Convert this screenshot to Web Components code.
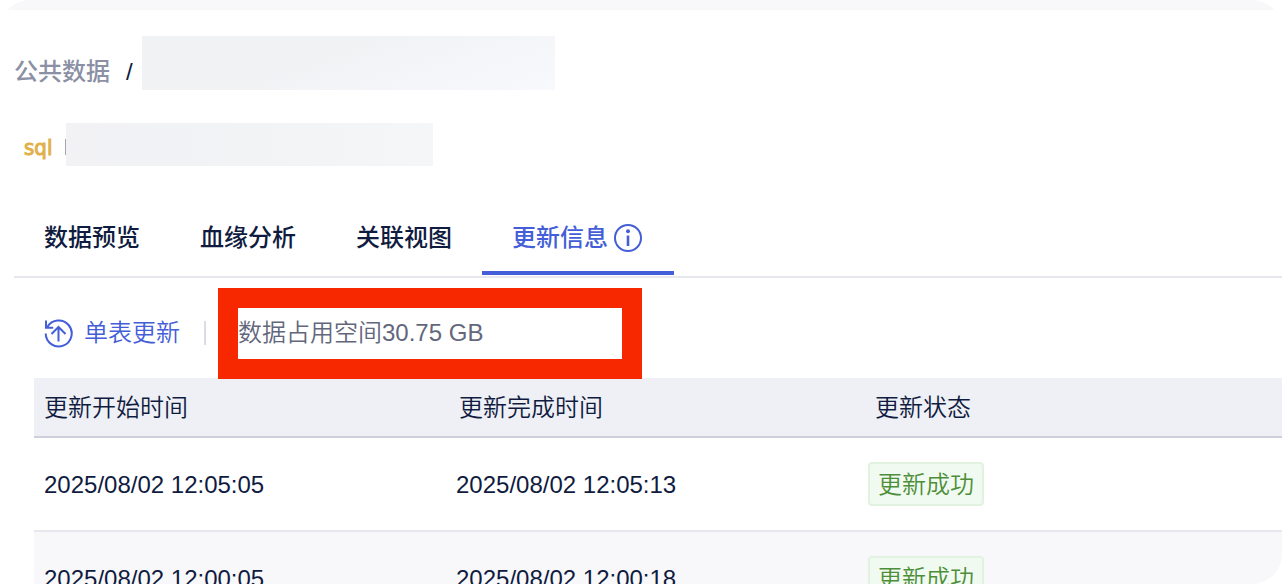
<!DOCTYPE html>
<html lang="zh-CN">
<head>
<meta charset="utf-8">
<meta name="viewport" content="width=device-width, initial-scale=1">
<title>更新信息</title>
<style>
    :root {
        --ink: #101b40;
        --muted: #8b90a5;
        --primary: #435ed8;
        --line: #e7e8ee;
        --surface: #f8f8fb;
    }
    body {
        margin: 0;
        background: #fff;
        color: var(--ink);
        font: 24px/36px "Liberation Sans", "Noto Sans CJK SC", sans-serif;
    }
</style>
</head>
<body>

<data-shell>
    <crumb-bar slot="header" parent="公共数据"></crumb-bar>
    <table-title slot="header" kind="sql"></table-title>
    <tab-bar>
        <tab-item>数据预览</tab-item>
        <tab-item>血缘分析</tab-item>
        <tab-item>关联视图</tab-item>
        <tab-item active info>更新信息</tab-item>
    </tab-bar>
    <update-toolbar action="单表更新">数据占用空间30.75 GB</update-toolbar>
    <update-table></update-table>
</data-shell>

<script>
class BaseElement extends HTMLElement {
    constructor() {
        super()
        this.attachShadow({mode: 'open'})
    }

    connectedCallback() {
        const template = document.createElement('template')
        template.innerHTML = this.getTemplate()
        this.shadowRoot.replaceChildren(template.content.cloneNode(true))
    }
}

class DataShell extends BaseElement {
    getTemplate() {
        return `
            <style>
                :host {
                    display: block;
                    box-sizing: border-box;
                    height: 100vh;
                    overflow: hidden;
                    border-radius: 30px;
                    border-bottom-left-radius: 0;
                    background: var(--surface);
                    padding-top: 10px;
                }
                main { min-height: 100%; background: #fff; padding-left: 14px; }
                header { padding: 26px 0 34px; display: grid; gap: 33px; }
            </style>
            <main>
                <header><slot name="header"></slot></header>
                <slot></slot>
            </main>
        `
    }
}

class CrumbBar extends BaseElement {
    getTemplate() {
        return `
            <style>
                :host { display: block; }
                nav { display: flex; align-items: flex-end; }
                a { color: var(--muted); text-decoration: none; font-weight: 500; }
                .sep { padding: 0 9px 0 16px; }
                .hidden-name {
                    width: 413px;
                    height: 54px;
                    background: linear-gradient(160deg, #f1f2f4 40%, #f8f9fc);
                }
            </style>
            <nav>
                <a href="#">${this.getAttribute('parent')}</a>
                <span class="sep">/</span>
                <span class="hidden-name"></span>
            </nav>
        `
    }
}

class TableTitle extends BaseElement {
    getTemplate() {
        return `
            <style>
                :host { display: flex; align-items: center; padding-left: 10px; }
                .kind {
                    width: 41px;
                    padding-top: 6px;
                    color: #e2b04a;
                    font: 22px/32px "DejaVu Sans Condensed", "DejaVu Sans", sans-serif;
                    -webkit-text-stroke: 1px currentColor;
                }
                .edge { width: 1px; height: 16px; margin-top: 5px; background: #a3a5b3; }
                .hidden-name {
                    width: 367px;
                    height: 43px;
                    background: linear-gradient(90deg, #f2f2f5, #f1f3f5 50%, #f5f6f8);
                }
            </style>
            <span class="kind">${this.getAttribute('kind')}</span>
            <span class="edge"></span>
            <span class="hidden-name"></span>
        `
    }
}

class TabBar extends BaseElement {
    getTemplate() {
        return `
            <style>
                :host {
                    display: flex;
                    padding-bottom: 1px;
                    border-bottom: 2px solid var(--line);
                }
            </style>
            <slot></slot>
        `
    }

    connectedCallback() {
        super.connectedCallback()
        this.setAttribute('role', 'tablist')
    }
}

class TabItem extends BaseElement {
    getTemplate() {
        const icon = `
            <svg width="28" height="28" viewBox="0 0 28 28" fill="none" stroke="currentColor" stroke-width="2" aria-hidden="true">
                <circle cx="14" cy="14" r="13"/>
                <path d="M14 11.5v10.5" stroke-width="2.6"/>
                <circle cx="14" cy="7.2" r="2" fill="currentColor" stroke="none"/>
            </svg>`

        return `
            <style>
                :host { display: block; }
                button {
                    display: flex;
                    align-items: center;
                    gap: 6px;
                    box-sizing: border-box;
                    height: 75px;
                    margin: 0;
                    padding: 4px 30px 0;
                    border: 0;
                    border-bottom: 4px solid transparent;
                    background: none;
                    color: inherit;
                    font: inherit;
                    font-weight: 500;
                    cursor: pointer;
                }
                :host([active]) button { padding-right: 32px; color: var(--primary); border-color: var(--primary); }
            </style>
            <button role="tab" aria-selected="${this.hasAttribute('active')}">
                <slot></slot>${this.hasAttribute('info') ? icon : ''}
            </button>
        `
    }
}

class UpdateToolbar extends BaseElement {
    getTemplate() {
        return `
            <style>
                :host {
                    display: flex;
                    align-items: center;
                    box-sizing: border-box;
                    height: 100px;
                    padding: 10px 0 0 30px;
                    font-weight: 350;
                }
                button {
                    display: flex;
                    align-items: center;
                    gap: 11px;
                    padding: 0;
                    border: 0;
                    background: none;
                    color: var(--primary);
                    font: inherit;
                    line-height: 38px;
                    cursor: pointer;
                }
                .divider { width: 2px; height: 24px; margin: 0 32px 0 24px; background: #dcdde3; }
                .usage { position: relative; color: #62677c; line-height: 38px; }
                /* highlight frame drawn over the toolbar */
                .mark {
                    position: absolute;
                    left: -20px;
                    top: -26px;
                    width: 384px;
                    height: 51px;
                    border: 20px solid #f72800;
                    pointer-events: none;
                }
            </style>
            <button>
                <svg width="29" height="29" viewBox="0 0 29 29" fill="none" stroke="currentColor" stroke-width="2" aria-hidden="true">
                    <path d="M1.7 14.5A13 13 0 1 0 3.4 8"/>
                    <path d="M2 1.5v7.3h7.2"/>
                    <path d="M14.5 22.5V8M7.5 15l7-7 7 7"/>
                </svg>
                ${this.getAttribute('action')}
            </button>
            <span class="divider"></span>
            <span class="usage"><slot></slot><span class="mark"></span></span>
        `
    }
}

class StatusTag extends BaseElement {
    getTemplate() {
        return `
            <style>
                :host {
                    display: inline-block;
                    box-sizing: border-box;
                    height: 44px;
                    padding: 0 8px;
                    border: 2px solid #e1f2e0;
                    border-radius: 4px;
                    background: #f1faf1;
                    color: #4d8f39;
                    line-height: 42px;
                    vertical-align: middle;
                }
            </style>
            <slot></slot>
        `
    }
}

class UpdateTable extends BaseElement {
    columns = ['更新开始时间', '更新完成时间', '更新状态']

    rows = [
        ['2025/08/02 12:05:05', '2025/08/02 12:05:13', '更新成功'],
        ['2025/08/02 12:00:05', '2025/08/02 12:00:18', '更新成功']
    ]

    getTemplate() {
        return `
            <style>
                :host { display: block; padding-left: 20px; }
                table {
                    width: 100%;
                    table-layout: fixed;
                    border-collapse: separate;
                    border-spacing: 0;
                }
                th, td {
                    box-sizing: border-box;
                    padding: 2px 0 0 9px;
                    text-align: left;
                    white-space: nowrap;
                }
                th {
                    height: 60px;
                    border-bottom: 2px solid #cfcfdc;
                    background: #eff0f6;
                    font-weight: 350;
                }
                td { height: 94px; border-bottom: 2px solid var(--line); }
                th:first-child, td:first-child { padding-left: 10px; }
                td:nth-child(2) { padding-left: 6px; }
                td:nth-child(3) { padding: 0 0 0 2px; font-weight: 350; }
                tr:nth-child(even) td { background: var(--surface); }
            </style>
            <table>
                <thead>
                    <tr>${this.columns.map(name => `<th scope="col">${name}</th>`).join('')}</tr>
                </thead>
                <tbody>
                    ${this.rows.map(([start, end, status]) => `
                        <tr><td>${start}</td><td>${end}</td><td><status-tag>${status}</status-tag></td></tr>
                    `).join('')}
                </tbody>
            </table>
        `
    }
}

window.customElements.define('data-shell', DataShell)
window.customElements.define('crumb-bar', CrumbBar)
window.customElements.define('table-title', TableTitle)
window.customElements.define('tab-bar', TabBar)
window.customElements.define('tab-item', TabItem)
window.customElements.define('update-toolbar', UpdateToolbar)
window.customElements.define('status-tag', StatusTag)
window.customElements.define('update-table', UpdateTable)
</script>
</body>
</html>
